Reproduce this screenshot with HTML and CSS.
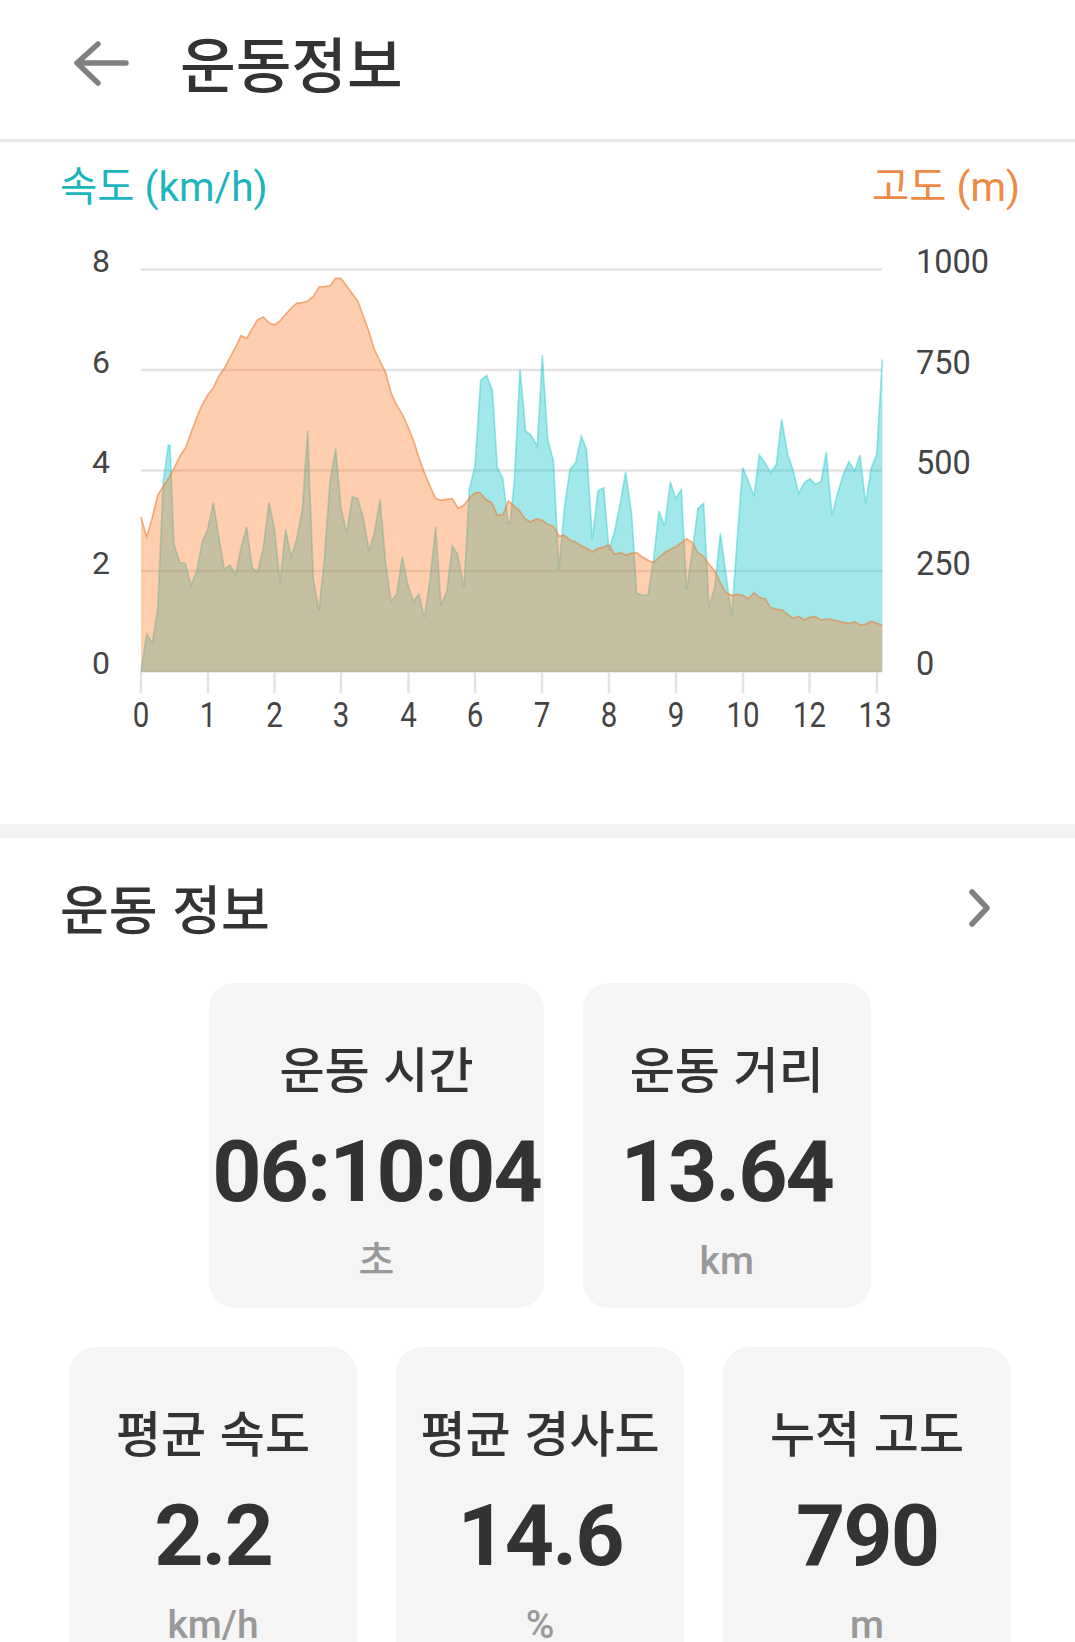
FILE: index.html
```html
<!DOCTYPE html>
<html lang="ko">
<head>
  <meta charset="UTF-8">
  <title>운동정보</title>
  <link rel="stylesheet" href="styles.css">
</head>
<body>
<div class="page">

  <header class="topbar">
    <svg class="back" width="60" height="50" viewBox="0 0 60 50">
      <path d="M6 24H55M27 5L6 24L27 44"/>
    </svg>
    <h1>운동정보</h1>
  </header>

  <section class="chart">
    <div class="legend">
      <span class="speed">속도 (km/h)</span>
      <span class="alt">고도 (m)</span>
    </div>

    <svg class="plot" width="1075" height="596" viewBox="0 228 1075 596">
      <g class="grid">
        <path d="M141 268.5H882M141 369H882M141 469.5H882M141 570H882M141 670.5H882"/>
        <path d="M141 670V692M208 670V692M274.5 670V692M341 670V692M408.5 670V692M475 670V692M542 670V692M609 670V692M676 670V692M743 670V692M809.5 670V692M877 670V692"/>
      </g>

      <!-- points are in 3x units, offset from (100,250) -->
      <g transform="translate(100 250) scale(0.33333)">
        <polygon class="fill-speed" points="123,1262 123,1260 140,1150 157,1175 173,1075 185,800 190,690 205,582 210,582 222,880 240,935 257,938 273,1003 290,960 307,870 323,835 340,755 357,860 373,955 390,942 407,972 423,890 440,828 457,952 473,962 490,890 507,755 523,830 540,995 557,835 573,917 590,865 607,775 623,540 640,985 657,1078 673,925 690,690 707,592 723,770 740,845 757,737 773,743 790,800 807,900 823,845 840,745 857,935 873,1050 890,1030 907,917 923,1000 940,1050 957,1030 973,1100 990,985 1007,828 1023,1063 1040,1023 1057,885 1073,910 1092,1010 1108,715 1125,645 1142,388 1160,373 1177,418 1192,650 1208,680 1225,817 1230,817 1243,690 1260,355 1277,540 1293,552 1312,585 1327,312 1343,565 1360,628 1377,955 1393,770 1410,655 1427,635 1444,555 1460,597 1477,865 1494,720 1511,710 1527,900 1544,840 1561,755 1577,662 1595,790 1610,1027 1627,1033 1644,1032 1660,930 1677,780 1694,825 1711,693 1727,742 1744,715 1760,1017 1777,900 1794,772 1811,757 1827,1068 1844,1010 1861,847 1878,970 1895,1098 1912,860 1928,650 1945,690 1962,735 1978,612 1995,635 2012,665 2029,640 2045,505 2063,610 2079,657 2096,727 2113,695 2130,683 2146,700 2163,692 2179,603 2196,795 2213,725 2230,670 2247,632 2264,660 2280,612 2297,757 2314,650 2330,610 2347,325 2347,1262"/>
        <polyline class="line-speed" points="123,1260 140,1150 157,1175 173,1075 185,800 190,690 205,582 210,582 222,880 240,935 257,938 273,1003 290,960 307,870 323,835 340,755 357,860 373,955 390,942 407,972 423,890 440,828 457,952 473,962 490,890 507,755 523,830 540,995 557,835 573,917 590,865 607,775 623,540 640,985 657,1078 673,925 690,690 707,592 723,770 740,845 757,737 773,743 790,800 807,900 823,845 840,745 857,935 873,1050 890,1030 907,917 923,1000 940,1050 957,1030 973,1100 990,985 1007,828 1023,1063 1040,1023 1057,885 1073,910 1092,1010 1108,715 1125,645 1142,388 1160,373 1177,418 1192,650 1208,680 1225,817 1230,817 1243,690 1260,355 1277,540 1293,552 1312,585 1327,312 1343,565 1360,628 1377,955 1393,770 1410,655 1427,635 1444,555 1460,597 1477,865 1494,720 1511,710 1527,900 1544,840 1561,755 1577,662 1595,790 1610,1027 1627,1033 1644,1032 1660,930 1677,780 1694,825 1711,693 1727,742 1744,715 1760,1017 1777,900 1794,772 1811,757 1827,1068 1844,1010 1861,847 1878,970 1895,1098 1912,860 1928,650 1945,690 1962,735 1978,612 1995,635 2012,665 2029,640 2045,505 2063,610 2079,657 2096,727 2113,695 2130,683 2146,700 2163,692 2179,603 2196,795 2213,725 2230,670 2247,632 2264,660 2280,612 2297,757 2314,650 2330,610 2347,325"/>
        <polygon class="fill-alt" points="123,1262 123,798 140,858 157,800 173,733 190,705 207,680 223,650 240,615 257,590 273,545 290,500 307,460 323,432 340,410 357,375 373,352 390,320 407,288 423,254 440,262 457,232 473,206 490,198 507,215 523,222 540,210 557,190 573,172 590,157 607,155 623,150 640,136 657,108 673,107 690,104 707,82 723,82 740,105 757,128 773,150 790,195 807,242 823,295 840,330 857,365 873,425 890,462 907,490 923,525 940,567 957,620 973,665 990,705 1007,743 1023,748 1040,745 1057,743 1075,772 1092,762 1110,738 1127,725 1140,725 1157,745 1175,755 1192,793 1210,790 1225,750 1242,765 1258,778 1275,803 1292,813 1310,803 1327,808 1343,820 1360,826 1377,855 1393,853 1410,867 1427,873 1444,885 1460,892 1477,903 1494,892 1511,888 1527,882 1544,910 1561,905 1578,912 1595,907 1610,905 1627,918 1644,928 1660,935 1677,920 1694,905 1711,895 1727,888 1744,875 1760,863 1777,875 1794,905 1811,917 1827,940 1844,960 1861,995 1878,1025 1895,1033 1912,1030 1928,1033 1945,1043 1962,1025 1979,1040 1995,1043 2012,1070 2029,1075 2046,1077 2063,1090 2079,1102 2096,1096 2113,1107 2130,1098 2146,1097 2163,1107 2180,1104 2197,1106 2213,1110 2230,1114 2247,1118 2264,1112 2280,1122 2297,1120 2314,1111 2330,1117 2347,1122 2347,1262"/>
        <polyline class="line-alt" points="123,798 140,858 157,800 173,733 190,705 207,680 223,650 240,615 257,590 273,545 290,500 307,460 323,432 340,410 357,375 373,352 390,320 407,288 423,254 440,262 457,232 473,206 490,198 507,215 523,222 540,210 557,190 573,172 590,157 607,155 623,150 640,136 657,108 673,107 690,104 707,82 723,82 740,105 757,128 773,150 790,195 807,242 823,295 840,330 857,365 873,425 890,462 907,490 923,525 940,567 957,620 973,665 990,705 1007,743 1023,748 1040,745 1057,743 1075,772 1092,762 1110,738 1127,725 1140,725 1157,745 1175,755 1192,793 1210,790 1225,750 1242,765 1258,778 1275,803 1292,813 1310,803 1327,808 1343,820 1360,826 1377,855 1393,853 1410,867 1427,873 1444,885 1460,892 1477,903 1494,892 1511,888 1527,882 1544,910 1561,905 1578,912 1595,907 1610,905 1627,918 1644,928 1660,935 1677,920 1694,905 1711,895 1727,888 1744,875 1760,863 1777,875 1794,905 1811,917 1827,940 1844,960 1861,995 1878,1025 1895,1033 1912,1030 1928,1033 1945,1043 1962,1025 1979,1040 1995,1043 2012,1070 2029,1075 2046,1077 2063,1090 2079,1102 2096,1096 2113,1107 2130,1098 2146,1097 2163,1107 2180,1104 2197,1106 2213,1110 2230,1114 2247,1118 2264,1112 2280,1122 2297,1120 2314,1111 2330,1117 2347,1122"/>
      </g>

      <g class="axis-y">
        <text x="101" y="271">8</text>
        <text x="101" y="372">6</text>
        <text x="101" y="472">4</text>
        <text x="101" y="573">2</text>
        <text x="101" y="673">0</text>
      </g>
      <g class="axis-y2">
        <text x="916" y="272">1000</text>
        <text x="916" y="373">750</text>
        <text x="916" y="473">500</text>
        <text x="916" y="574">250</text>
        <text x="916" y="674">0</text>
      </g>
      <g class="axis-x">
        <text x="141" y="726">0</text>
        <text x="208" y="726">1</text>
        <text x="274.5" y="726">2</text>
        <text x="341" y="726">3</text>
        <text x="408.5" y="726">4</text>
        <text x="475" y="726">6</text>
        <text x="542" y="726">7</text>
        <text x="609" y="726">8</text>
        <text x="676" y="726">9</text>
        <text x="743" y="726">10</text>
        <text x="809.5" y="726">12</text>
        <text x="875" y="726">13</text>
      </g>
    </svg>
  </section>

  <section class="info">
    <div class="info-head">
      <h2>운동 정보</h2>
      <svg class="more" width="22" height="38" viewBox="0 0 22 38">
        <path d="M3 3L18 19L3 35"/>
      </svg>
    </div>

    <div class="row">
      <div class="card">
        <div class="label">운동 시간</div>
        <div class="value">06:10:04</div>
        <div class="unit">초</div>
      </div>
      <div class="card">
        <div class="label">운동 거리</div>
        <div class="value">13.64</div>
        <div class="unit">km</div>
      </div>
    </div>

    <div class="row">
      <div class="card">
        <div class="label">평균 속도</div>
        <div class="value">2.2</div>
        <div class="unit">km/h</div>
      </div>
      <div class="card">
        <div class="label">평균 경사도</div>
        <div class="value">14.6</div>
        <div class="unit">%</div>
      </div>
      <div class="card">
        <div class="label">누적 고도</div>
        <div class="value">790</div>
        <div class="unit">m</div>
      </div>
    </div>
  </section>

</div>
</body>
</html>
```

FILE: styles.css
```css
body {
  margin: 0;
  background: #fff;
  font-family: "Noto Sans CJK KR", Roboto, sans-serif;
  color: #333;
}

.page {
  width: 1075px;
  height: 1642px;
  overflow: hidden;
}

.topbar {
  display: flex;
  align-items: center;
  height: 125px;
  padding: 0 0 14px 71px;
  border-bottom: 3px solid #e8e8e8;
}

.back {
  margin-top: 2px;
  margin-right: 49px;
}

.back path,
.more path {
  fill: none;
  stroke: #808080;
  stroke-width: 5.5px;
  stroke-linecap: round;
  stroke-linejoin: round;
}

h1 {
  margin: 0;
  font-size: 60.5px;
  font-weight: 500;
  line-height: 1;
}

.chart {
  height: 682px;
}

.legend {
  display: flex;
  justify-content: space-between;
  height: 87px;
  padding: 0 55px 0 60px;
  font-family: Roboto, "Noto Sans CJK KR", sans-serif;
  font-size: 40.5px;
  line-height: 91px;
}

.speed {
  color: #1db5bd;
}

.alt {
  color: #ee8a45;
}

.plot {
  display: block;
}

.grid path {
  fill: none;
  stroke: #e3e3e3;
  stroke-width: 2.5px;
}

.fill-speed {
  fill: #16c5ca;
  fill-opacity: 0.4;
}

.line-speed {
  fill: none;
  stroke: #16c5ca;
  stroke-opacity: 0.4;
  stroke-width: 5px;
}

.fill-alt {
  fill: #ff7d2a;
  fill-opacity: 0.38;
}

.line-alt {
  fill: none;
  stroke: #e8803a;
  stroke-opacity: 0.6;
  stroke-width: 5px;
}

.plot text {
  font-family: Roboto, sans-serif;
  fill: #444;
}

.axis-y text {
  font-size: 32px;
  text-anchor: middle;
}

.axis-y2 text {
  font-size: 32.5px;
}

.axis-x text {
  font-size: 36px;
  text-anchor: middle;
  transform-box: fill-box;
  transform-origin: center;
  transform: scaleX(0.82);
}

.info {
  border-top: 14px solid #f2f3f5;
}

.info-head {
  display: flex;
  justify-content: space-between;
  align-items: center;
  height: 139px;
  padding: 0 84px 1px 60px;
}

h2 {
  margin: 0;
  font-size: 53px;
  font-weight: 500;
  line-height: 1;
}

.row {
  display: flex;
  justify-content: center;
  gap: 39px;
  margin-bottom: 39px;
  padding: 5px 0 0 5px;
}

.row + .row {
  padding-top: 0;
}

.card {
  box-sizing: border-box;
  min-width: 288px;
  height: 325px;
  padding: 57px 3px 0;
  background: #f5f5f5;
  border-radius: 26px;
  text-align: center;
}

.label {
  font-size: 49px;
  font-weight: 500;
  line-height: 54px;
}

.value {
  margin-top: 33px;
  font-family: Roboto, sans-serif;
  font-size: 86px;
  font-weight: 700;
  letter-spacing: -2px;
  line-height: 90px;
}

.unit {
  margin-top: 19px;
  font-family: Roboto, "Noto Sans CJK KR", sans-serif;
  font-size: 39px;
  font-weight: 500;
  line-height: 50px;
  color: #999;
}
```
